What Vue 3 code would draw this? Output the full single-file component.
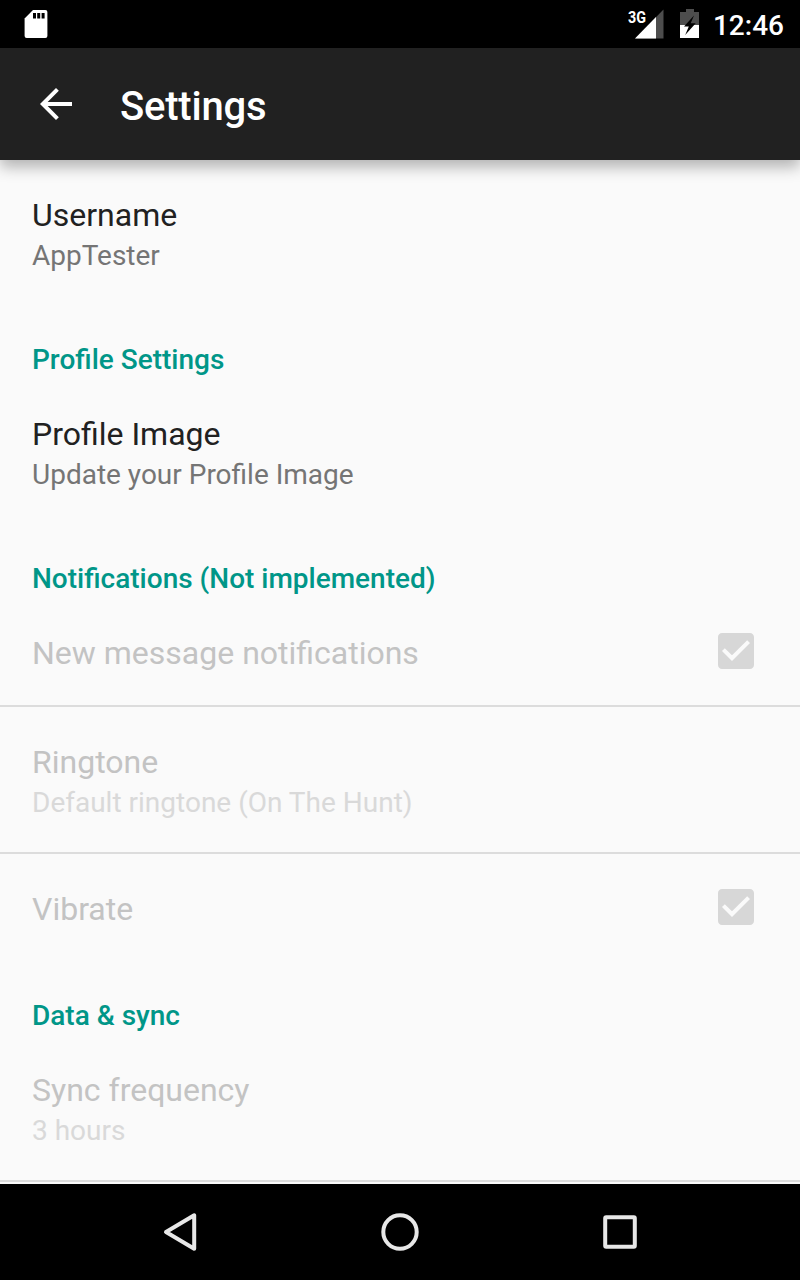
<script setup>
const items = [
  { kind: 'row', title: 'Username', summary: 'AppTester' },
  { kind: 'section', title: 'Profile Settings' },
  { kind: 'row', title: 'Profile Image', summary: 'Update your Profile Image' },
  { kind: 'section', title: 'Notifications (Not implemented)' },
  { kind: 'row', title: 'New message notifications', disabled: true, checked: true, divider: true },
  { kind: 'row', title: 'Ringtone', summary: 'Default ringtone (On The Hunt)', disabled: true, divider: true },
  { kind: 'row', title: 'Vibrate', disabled: true, checked: true },
  { kind: 'section', title: 'Data & sync' },
  { kind: 'row', title: 'Sync frequency', summary: '3 hours', disabled: true, divider: true },
]
</script>

<template>
  <div class="screen">
    <div class="status">
      <svg class="sd" width="24" height="28" viewBox="0 0 24 28">
        <path fill="#fff" d="M9 0H21.400Q23.400 0 23.400 2V26Q23.400 28 21.400 28H2.600Q.6 28 .6 26V8.500Z" />
        <path fill="#000" d="M9 3h3v5.500H9zM13.200 3h3v5.500h-3zM17.600 3h3v5.500h-3z" />
      </svg>
      <div class="status-right">
        <svg class="signal" width="36" height="30" viewBox="0 0 36 30">
          <path fill="#4d4d4d" d="M35.500 .5V29.500H7Z" />
          <path fill="#fff" d="M28 8V29.500H7Z" />
          <text class="net" x="0" y="14" textLength="18" lengthAdjust="spacingAndGlyphs">3G</text>
        </svg>
        <svg class="battery" width="20" height="30" viewBox="0 0 20 30">
          <path fill="#4d4d4d" d="M6 0h8v3h5v13H0V3h6z" />
          <path fill="#fff" d="M0 16h19v13H0z" />
          <path fill="#000" d="M14 6.500 4 17.500h4.800L5.200 26 15.700 14.200h-5z" />
        </svg>
        <span class="clock">12:46</span>
      </div>
    </div>
    <header class="bar">
      <svg width="48" height="48" viewBox="0 0 24 24">
        <path fill="#fff" d="M20 11H7.830l5.590-5.590L12 4l-8 8 8 8 1.410-1.410L7.830 13H20v-2z" />
      </svg>
      <h1>Settings</h1>
    </header>
    <main class="list">
      <template v-for="item in items" :key="item.title">
        <h2 v-if="item.kind === 'section'" class="section">{{ item.title }}</h2>
        <div v-else class="row" :class="{ disabled: item.disabled, divider: item.divider }">
          <div class="texts">
            <div class="title">{{ item.title }}</div>
            <div v-if="item.summary" class="summary">{{ item.summary }}</div>
          </div>
          <svg v-if="item.checked" class="check" width="48" height="48" viewBox="0 0 24 24">
            <path fill="#d7d7d7" d="M19 3H5c-1.110 0-2 .9-2 2v14c0 1.100.89 2 2 2h14c1.110 0 2-.9 2-2V5c0-1.100-.89-2-2-2zm-9 14l-5-5 1.410-1.410L10 14.170l7.590-7.590L19 8l-9 9z" />
          </svg>
        </div>
      </template>
    </main>
    <nav class="nav">
      <svg width="48" height="48" viewBox="0 0 48 48">
        <path d="M38.200 7.300V40.700L10 24Z" />
      </svg>
      <svg width="48" height="48" viewBox="0 0 48 48">
        <circle cx="24" cy="24" r="16.700" />
      </svg>
      <svg width="48" height="48" viewBox="0 0 48 48">
        <rect x="9.200" y="9.200" width="29.600" height="29.600" rx="1" />
      </svg>
    </nav>
  </div>
</template>

<style>
body {
  margin: 0;
}
</style>

<style scoped>
.screen {
  width: 800px;
  height: 1280px;
  display: flex;
  flex-direction: column;
  overflow: hidden;
  background: #fafafa;
  font-family: Roboto, sans-serif;
}
.status {
  flex: none;
  height: 48px;
  box-sizing: border-box;
  display: flex;
  justify-content: space-between;
  align-items: center;
  padding: 0 16px 0 24px;
  background: #000;
}
.status-right {
  display: flex;
  align-items: center;
  color: #fff;
}
.signal {
  margin-right: 16px;
}
.net {
  font-size: 16.5px;
  font-weight: 700;
  fill: #fff;
}
.battery {
  margin-right: 13px;
}
.clock {
  font-size: 28px;
  font-weight: 500;
  line-height: 33px;
  margin-top: 3px;
}
.bar {
  flex: none;
  position: relative;
  z-index: 1;
  height: 112px;
  display: flex;
  align-items: center;
  gap: 40px;
  padding-left: 32px;
  background: #212121;
  box-shadow: 0 7px 14px rgba(0, 0, 0, 0.29);
}
h1 {
  margin: 5px 0 0;
  color: #fff;
  font-size: 40px;
  font-weight: 500;
  letter-spacing: -0.2px;
  line-height: 47px;
}
.list {
  flex: 1;
  min-height: 0;
  overflow: hidden;
}
.row {
  display: flex;
  justify-content: space-between;
  align-items: flex-start;
  padding: 36px 40px 33px 32px;
}
.divider {
  border-bottom: 2px solid #dcdcdc;
}
.title {
  color: #212121;
  font-size: 32px;
  line-height: 38px;
}
.summary {
  margin-top: 5px;
  color: #757575;
  font-size: 28px;
  line-height: 33px;
}
.disabled .title {
  color: #c3c3c3;
}
.disabled .summary {
  color: #d9d9d9;
}
.check {
  margin: -7px 0 -10px;
}
.section {
  margin: 0;
  padding: 38px 32px 3px;
  color: #009688;
  font-size: 28px;
  font-weight: 500;
  line-height: 33px;
}
.nav {
  flex: none;
  height: 96px;
  display: flex;
  justify-content: center;
  align-items: center;
  gap: 172px;
  background: #000;
}
.nav svg {
  fill: none;
  stroke: #e8e8e8;
  stroke-width: 4;
  stroke-linejoin: round;
}
</style>
